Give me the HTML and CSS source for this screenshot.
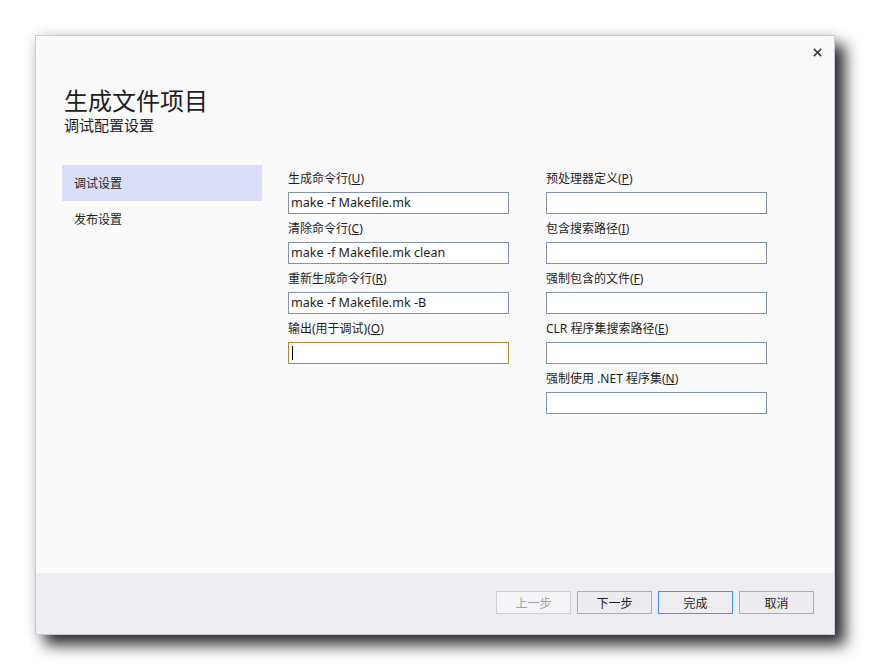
FILE: index.html
```html
<!DOCTYPE html>
<html lang="zh-CN">
<head>
<meta charset="utf-8">
<title>生成文件项目</title>
<link rel="stylesheet" href="styles.css">
</head>
<body>
<div class="desk">
  <div class="dialog">
    <div class="titlebar">
      <button class="close" aria-label="关闭">
        <svg width="9" height="9" viewBox="0 0 9 9"><path d="M0.8 0.8 L8.2 8.2 M8.2 0.8 L0.8 8.2" stroke="#404040" stroke-width="1.7" fill="none"/></svg>
      </button>
    </div>
    <div class="heading">
      <h1 class="title">生成文件项目</h1>
      <div class="subtitle">调试配置设置</div>
    </div>
    <div class="content">
      <nav class="sidebar">
        <div class="nav-item active">调试设置</div>
        <div class="nav-item">发布设置</div>
      </nav>
      <div class="column">
        <div class="row">
          <div class="label">生成命令行(<u>U</u>)</div>
          <div class="field">make -f Makefile.mk</div>
        </div>
        <div class="row">
          <div class="label">清除命令行(<u>C</u>)</div>
          <div class="field">make -f Makefile.mk clean</div>
        </div>
        <div class="row">
          <div class="label">重新生成命令行(<u>R</u>)</div>
          <div class="field">make -f Makefile.mk -B</div>
        </div>
        <div class="row">
          <div class="label">输出(用于调试)(<u>O</u>)</div>
          <div class="field focused"><span class="caret"></span></div>
        </div>
      </div>
      <div class="column">
        <div class="row">
          <div class="label">预处理器定义(<u>P</u>)</div>
          <div class="field"></div>
        </div>
        <div class="row">
          <div class="label">包含搜索路径(<u>I</u>)</div>
          <div class="field"></div>
        </div>
        <div class="row">
          <div class="label">强制包含的文件(<u>F</u>)</div>
          <div class="field"></div>
        </div>
        <div class="row">
          <div class="label">CLR 程序集搜索路径(<u>E</u>)</div>
          <div class="field"></div>
        </div>
        <div class="row">
          <div class="label">强制使用 .NET 程序集(<u>N</u>)</div>
          <div class="field"></div>
        </div>
      </div>
    </div>
    <div class="footer">
      <button class="btn disabled">上一步</button>
      <button class="btn">下一步</button>
      <button class="btn default">完成</button>
      <button class="btn">取消</button>
    </div>
  </div>
</div>
</body>
</html>
```

FILE: styles.css
```css
html, body {
  margin: 0;
  padding: 0;
  background: #ffffff;
}

body {
  font-family: "Noto Sans", "Noto Sans CJK SC", sans-serif;
  color: #1e1e1e;
  font-size: 12px;
}

.desk {
  padding: 35px;
}

.dialog {
  box-sizing: border-box;
  width: 800px;
  height: 600px;
  border: 1px solid #c8c8d8;
  background: #fafafa;
  display: flex;
  flex-direction: column;
  box-shadow: 10px 10px 14px rgba(0, 0, 0, 0.82), 0 0 12px rgba(0, 0, 0, 0.12);
}

.titlebar {
  height: 32px;
  display: flex;
  justify-content: flex-end;
  align-items: center;
  padding-right: 12px;
}

.close {
  border: 0;
  background: none;
  padding: 0;
  width: 9px;
  height: 9px;
  display: flex;
}

.heading {
  padding: 19px 0 0 28px;
}

.title {
  margin: 0;
  font-family: "Liberation Sans", "Noto Sans CJK SC", sans-serif;
  font-weight: 400;
  font-size: 24px;
  line-height: 30px;
  color: #1e1e1e;
}

.subtitle {
  font-family: "Liberation Sans", "Noto Sans CJK SC", sans-serif;
  font-size: 15px;
  line-height: 18px;
}

.content {
  margin-top: 29px;
  display: flex;
  padding-left: 26px;
  flex: 1;
}

.sidebar {
  width: 200px;
  padding-top: 1px;
  margin-right: 26px;
}

.nav-item {
  height: 36px;
  line-height: 36px;
  padding-left: 12px;
  font-family: "Noto Sans CJK SC", sans-serif;
  font-size: 12px;
}

.nav-item.active {
  background: #dadff7;
}

.column {
  width: 221px;
  margin-right: 37px;
}

.row {
  padding-top: 7px;
}

.label {
  line-height: 16px;
  height: 16px;
  margin-bottom: 5px;
  white-space: nowrap;
}

.label u {
  text-underline-offset: 1px;
}

.field {
  box-sizing: border-box;
  height: 22px;
  border: 1px solid #8192aa;
  background: #ffffff;
  padding: 0 2px;
  font-size: 12.6px;
  line-height: 20px;
  white-space: nowrap;
  overflow: hidden;
  display: flex;
  align-items: center;
}

.field.focused {
  border-color: #b4862c;
}

.caret {
  display: block;
  width: 1px;
  height: 14px;
  background: #000000;
  margin-left: 1px;
}

.footer {
  height: 61px;
  box-sizing: border-box;
  background: #eeeef2;
  display: flex;
  justify-content: flex-end;
  gap: 6px;
  padding: 18px 20px 0 0;
}

.btn {
  box-sizing: border-box;
  width: 75px;
  height: 23px;
  border: 1px solid #acacac;
  background: #ececf0;
  color: #1e1e1e;
  font-family: "Noto Sans CJK SC", sans-serif;
  font-size: 12px;
  padding: 0;
  line-height: 21px;
}

.btn.disabled {
  border-color: #cfcfdc;
  background: #f5f5f7;
  color: #a2a2a2;
}

.btn.default {
  border-color: #3399ff;
  background: #eeeef2;
}
```
